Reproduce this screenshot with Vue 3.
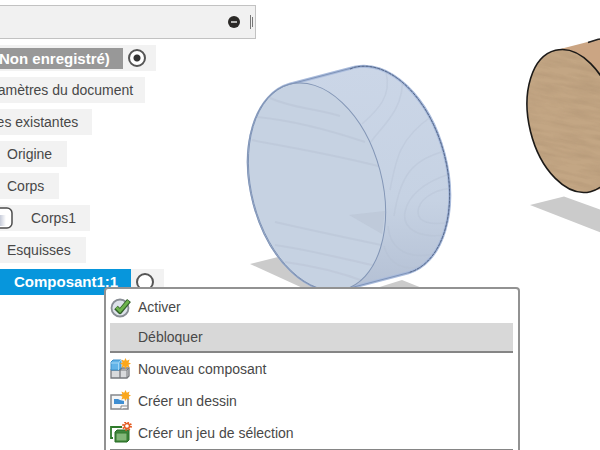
<template>
  <main class="workspace">
    <svg class="scene" aria-hidden="true">
      <defs>
        <filter id="wood" x="0" y="0" width="100%" height="100%">
          <feTurbulence type="fractalNoise" baseFrequency="0.03 0.2" numOctaves="4" seed="4" />
          <feColorMatrix values="0 0 0 0 0.36  0 0 0 0 0.24  0 0 0 0 0.14  1.4 0 0 0 -0.5" />
        </filter>
        <clipPath id="selected-front">
          <ellipse cx="316.5" cy="187" rx="65.6" ry="106.2" transform="rotate(-14.8 316.5 187)" />
        </clipPath>
        <clipPath id="selected-body">
          <path d="M289.5 84.3L354.5 67.3A65.6 106.2 -14.8 0 1 408.5 272.7L343.5 289.7A65.6 106.2 -14.8 0 1 289.5 84.3Z" />
        </clipPath>
        <clipPath id="wood-front">
          <ellipse cx="573" cy="121" rx="43.8" ry="72.8" transform="rotate(-13.9 573 121)" />
        </clipPath>
        <linearGradient id="rim" x1="0" y1="0" x2="0" y2="1">
          <stop offset="0" stop-color="#cbd6e7" />
          <stop offset="0.6" stop-color="#c6d2e3" />
          <stop offset="1" stop-color="#b4c0d4" />
        </linearGradient>
      </defs>

      <!-- shadows on the ground -->
      <g fill="#cbcbcb">
        <path d="M250 264L278 257L330 295H318Z" />
        <path d="M370 290L402 280L432 292Z" />
        <path d="M530 205L564 196.500L700 246V271Z" />
      </g>

      <!-- selected cylinder -->
      <path
        d="M289.5 84.3L354.5 67.3A65.6 106.2 -14.8 0 1 408.5 272.7L343.5 289.7A65.6 106.2 -14.8 0 1 289.5 84.3Z"
        fill="url(#rim)" stroke="#a9bbdc" stroke-width="3"
      />
      <g clip-path="url(#selected-body)" fill="none" stroke="#b4bfd2" stroke-width="1.5" opacity="0.35">
        <path d="M386 72C392 96 378 110 362 124M402 76C406 110 378 130 371 142M432 116C400 138 396 158 390 190" />
        <path d="M450 150C412 158 400 176 394 216M450 174C424 182 408 196 405 212S418 240 450 234" />
        <path d="M452 188C430 190 418 202 418 212S430 226 452 222M388 226C390 250 410 262 440 252M384 246C390 268 410 272 428 264" />
      </g>
      <g clip-path="url(#selected-front)">
        <rect x="245" y="80" width="145" height="215" fill="#c6d2e2" />
        <g fill="none" stroke="#b7c2d3" stroke-width="2" opacity="0.45">
          <path d="M270 98C292 108 312 108 340 116M257 117C288 120 320 127 365 142M252 140C292 148 332 154 386 168" />
          <path d="M275 222C310 230 338 236 386 246M275 245C310 250 340 258 376 266M285 262C315 266 340 272 366 282" />
        </g>
        <path d="M349 215L385 211L382 234Z" fill="#b7c1d2" opacity="0.5" />
      </g>
      <ellipse cx="316.5" cy="187" rx="65.6" ry="106.2" transform="rotate(-14.8 316.5 187)" fill="none" stroke="#8396b6" />
      <path
        d="M289.5 84.3L354.5 67.3A65.6 106.2 -14.8 0 1 408.5 272.7L343.5 289.7A65.6 106.2 -14.8 0 1 289.5 84.3Z"
        fill="none" stroke="#7f94b8"
      />
      <path
        d="M350 69L354.5 67.3A65.6 106.2 -14.8 0 1 408.5 272.7"
        fill="none" stroke="#56688a" stroke-dasharray="3 1"
      />

      <!-- wooden cylinder -->
      <path d="M555.3 50.3L598.3 39.3A43.8 72.8 -13.9 0 1 633.7 180.7L590.7 191.700Z" fill="#cba583" />
      <path
        d="M588 42.500L598.3 39.3A43.8 72.8 -13.9 0 1 633.7 180.7"
        fill="none" stroke="#222" stroke-width="1.500"
      />
      <g clip-path="url(#wood-front)">
        <rect x="525" y="45" width="100" height="150" fill="#c3a684" />
        <rect x="495" y="10" width="180" height="230" filter="url(#wood)" transform="rotate(12 573 121)" opacity="0.45" />
      </g>
      <ellipse cx="573" cy="121" rx="43.8" ry="72.8" transform="rotate(-13.9 573 121)" fill="none" stroke="#1c1a18" stroke-width="1.6" />
    </svg>

    <section class="browser">
      <header class="browser-head">
        <button class="collapse" aria-label="Réduire">
          <svg width="12" height="12" viewBox="0 0 12 12">
            <circle cx="6" cy="6" r="6" fill="#2b2927" />
            <path d="M3 6H9" stroke="#e4e4e4" stroke-width="1.500" />
          </svg>
        </button>
        <span class="grip"></span>
      </header>

      <ul class="tree">
        <li v-for="row in rows" :key="row.label" class="row" :class="row.kind">
          <svg v-if="row.body" class="body-icon" width="22" height="22" viewBox="0 0 22 22">
            <defs>
              <linearGradient id="body-fill">
                <stop offset="0.3" stop-color="#b9bfd0" />
                <stop offset="0.8" stop-color="#fff" />
              </linearGradient>
            </defs>
            <rect x="1" y="1" width="20" height="20" rx="5" fill="#fff" stroke="#4c4c4c" stroke-width="1.500" />
            <path d="M3 8H18V16Q18 19 15 19H3Z" fill="url(#body-fill)" />
          </svg>
          <span class="label">{{ row.label }}</span>
          <input
            v-if="row.radio" v-model="active" class="radio" type="radio"
            name="active" :value="row.label" :aria-label="row.label"
          >
        </li>
      </ul>
    </section>

    <nav class="menu">
      <button v-for="item in items" :key="item.label" class="item" :class="{ hover: item.hover }">
        <span class="icon">
          <svg v-if="item.icon === 'check'" width="22" height="22" viewBox="0 0 22 22">
            <circle cx="10" cy="12" r="8.500" fill="#dde2ea" stroke="#888d94" stroke-width="1.800" />
            <path d="M6 11.500L10 15.500L19 4.500" fill="none" stroke="#32602a" stroke-width="5" stroke-linejoin="round" />
            <path d="M6.500 11.500L10 15L18.500 5" fill="none" stroke="#6db44d" stroke-width="2.800" />
          </svg>
          <svg v-else-if="item.icon === 'component'" width="22" height="22" viewBox="0 0 22 22">
            <path d="M1 12H10V20H1ZM10 12L12 10H19V18L17 20H10Z" fill="#d9dadc" stroke="#77797d" stroke-width="1.300" />
            <path d="M10 12H17V20M17 12L19 10" fill="none" stroke="#77797d" />
            <path d="M1 12V4L3 2H11V10L9 12Z" fill="#61b3e8" stroke="#3c8fc9" />
            <path d="M1 5H8.500V12M8.500 5L11 2" fill="none" stroke="#a4d7f5" />
            <path :d="star" fill="#fba71b" />
          </svg>
          <svg v-else-if="item.icon === 'drawing'" width="22" height="22" viewBox="0 0 22 22">
            <path d="M1 5H18V19H1Z" fill="#f4f5f6" stroke="#85888c" stroke-width="1.500" />
            <path d="M4 9H8L10 10L14 11V14H4Z" fill="#3e8ed2" />
            <path d="M11 19V16H18" fill="#fff" stroke="#85888c" />
            <path :d="star" fill="#fba71b" />
          </svg>
          <svg v-else-if="item.icon === 'set'" width="22" height="22" viewBox="0 0 22 22">
            <path d="M3 16H1V5H12" fill="none" stroke="#2f7b2c" stroke-width="1.800" />
            <path d="M5 10L7 8H19V18L17 20H5Z" fill="#3f853b" stroke="#276c25" />
            <path d="M6 11H17V19H6Z" fill="#83b779" stroke="#327b2f" />
            <circle cx="17" cy="4" r="4" fill="none" stroke="#e45a20" stroke-width="1.800" stroke-dasharray="1.6 1.54" />
            <circle cx="17" cy="4" r="2.500" fill="#fff" stroke="#e45a20" stroke-width="1.400" />
          </svg>
        </span>
        {{ item.label }}
      </button>
      <hr class="rule">
    </nav>
  </main>
</template>

<script setup>
import { ref } from 'vue'

const active = ref('(Non enregistré)')

const star = 'M15.500 0L16.800 2.700L19.600 1.600L18.500 4.400L21 5.500L18.500 6.700L19.600 9.400L16.800 8.400L15.500 11L14.200 8.400L11.400 9.400L12.500 6.700L10 5.500L12.500 4.400L11.400 1.600L14.200 2.700Z'

const rows = [
  { label: '(Non enregistré)', kind: 'root', radio: true },
  { label: 'Paramètres du document', kind: 'settings' },
  { label: 'Vues existantes', kind: 'views' },
  { label: 'Origine', kind: 'folder' },
  { label: 'Corps', kind: 'folder' },
  { label: 'Corps1', kind: 'solid', body: true },
  { label: 'Esquisses', kind: 'folder' },
  { label: 'Composant1:1', kind: 'selected', radio: true },
]

const items = [
  { label: 'Activer', icon: 'check' },
  { label: 'Débloquer', hover: true },
  { label: 'Nouveau composant', icon: 'component' },
  { label: 'Créer un dessin', icon: 'drawing' },
  { label: 'Créer un jeu de sélection', icon: 'set' },
]
</script>

<style>
body { margin: 0; background: #fff; }
</style>

<style scoped>
.workspace {
  position: relative;
  height: 100vh;
  overflow: hidden;
  font-family: 'Liberation Sans', Arial, sans-serif;
  font-size: 14px;
  color: #484848;
}

.scene {
  position: absolute;
  inset: 0;
  width: 100%;
  height: 100%;
}

.browser {
  position: relative;
  width: 256px;
  padding-top: 5px;
}

.browser-head {
  display: flex;
  align-items: center;
  justify-content: flex-end;
  gap: 10px;
  box-sizing: border-box;
  height: 34px;
  padding-right: 2px;
  background: #f1f1f1;
  border: 1px solid #c2c2c2;
  border-left: 0;
}

.collapse {
  display: flex;
  padding: 0;
  border: 0;
  background: none;
}

.grip {
  display: flex;
  align-items: center;
  gap: 1px;
}

.grip::before, .grip::after {
  content: '';
  width: 1px;
  height: 14px;
  background: #777;
}

.grip::after { height: 10px; }

.tree {
  display: flex;
  flex-direction: column;
  align-items: flex-start;
  gap: 6px;
  margin: 6px 0 0 -40px;
  padding: 0;
  list-style: none;
}

.row {
  display: flex;
  align-items: center;
  box-sizing: border-box;
  height: 26px;
  padding: 0 15px 0 47px;
  background: #f2f2f2;
  white-space: nowrap;
}

.row.settings { padding: 0 12px 0 16px; }
.row.views { padding: 0 14px 0 20px; }
.row.solid { gap: 18px; padding: 0 14px 0 31px; }

.row.root, .row.selected {
  padding: 0 10px 0 0;
  font-size: 15px;
  font-weight: 700;
  color: #fff;
}

.row.root .label {
  padding: 0 13px 0 34px;
  line-height: 21px;
  background: #989898;
}

.row.selected .label {
  padding: 0 13px 0 54px;
  line-height: 26px;
  background: #0796dc;
}

.radio {
  appearance: none;
  width: 18px;
  height: 18px;
  margin: 0 0 0 5px;
  border: 2px solid #555;
  border-radius: 50%;
  background: #fff;
}

.radio:checked { background: radial-gradient(circle, #333 3px, #fff 4px); }

.menu {
  position: absolute;
  top: 287px;
  left: 104px;
  box-sizing: border-box;
  width: 416px;
  padding: 2px 5px 20px 4px;
  background: #fff;
  border: 2px solid #929292;
  border-radius: 4px;
}

.item {
  display: flex;
  align-items: center;
  width: 100%;
  height: 32px;
  padding: 0;
  border: 0;
  background: none;
  font: inherit;
  color: inherit;
  text-align: left;
}

.item.hover {
  height: 30px;
  background: #d8d8d8;
  border-bottom: 2px solid #858585;
}

.icon {
  width: 28px;
  height: 22px;
}

.rule {
  height: 2px;
  margin: 0;
  border: 0;
  background: #858585;
}
</style>
